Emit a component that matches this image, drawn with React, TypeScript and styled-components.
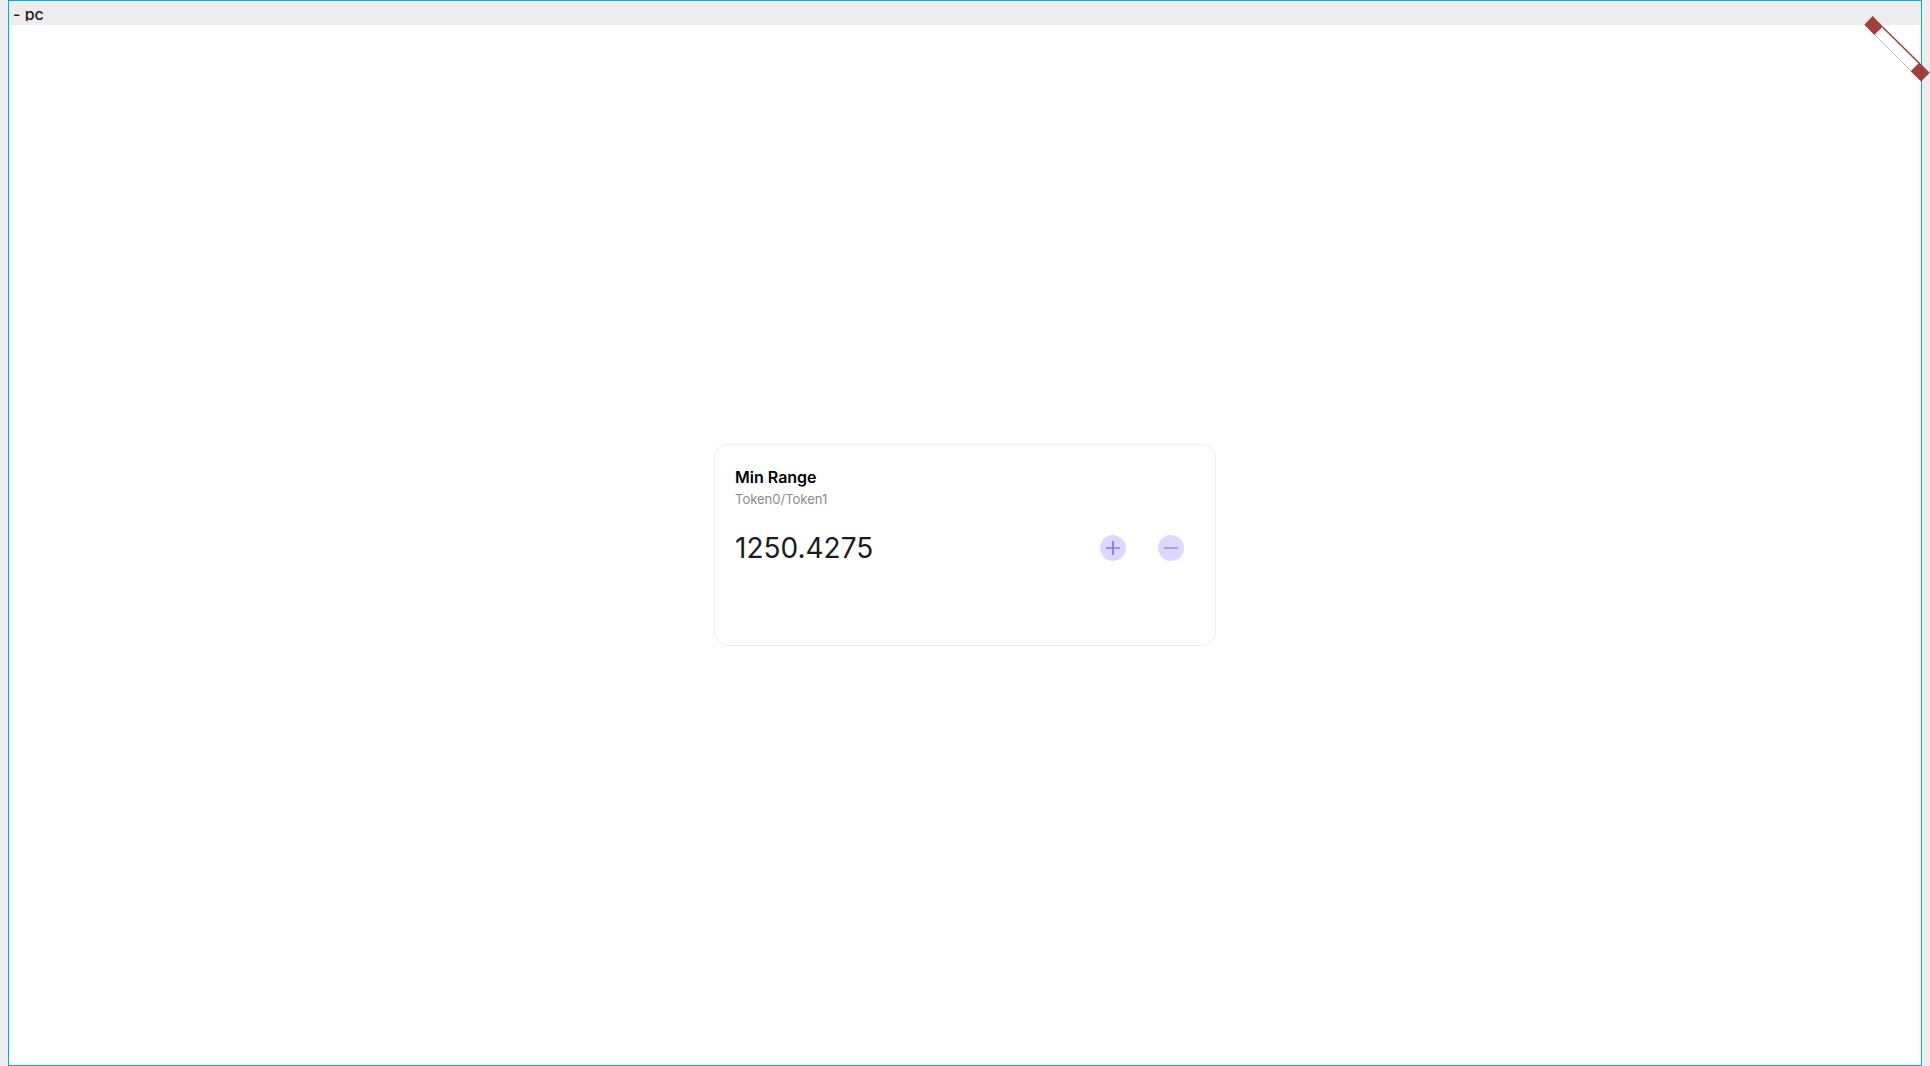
import React, { useState } from "react";
import styled, { createGlobalStyle } from "styled-components";

const GlobalStyle = createGlobalStyle`
  *, *::before, *::after { box-sizing: border-box; }
  body {
    margin: 0;
    background: #ededed;
    color: #1c1b1f;
    font-family: Inter, "Liberation Sans", sans-serif;
  }
`;

const Page = styled.div`
  position: relative;
  min-height: 100vh;
  padding: 0 8px;
  display: flex;
`;

const Frame = styled.main`
  flex: 1;
  display: flex;
  flex-direction: column;
  border: 1px solid #08a5ef;
`;

const FrameHeader = styled.header`
  height: 24px;
  padding: 2px 4px 0;
  background: #ededed;
`;

const FrameLabel = styled.h1`
  height: 18px;
  margin: 0;
  overflow: hidden;
  font-size: 16px;
  font-weight: 500;
  line-height: 22px;
`;

const Canvas = styled.div`
  flex: 1;
  display: flex;
  align-items: center;
  justify-content: center;
  background: #fff;
`;

const Card = styled.section`
  width: 100%;
  max-width: 502px;
  min-height: 202px;
  padding: 20px;
  border: 1px solid #efeff1;
  border-radius: 14px;
`;

const Title = styled.h2`
  margin: 0;
  color: #000;
  font-size: 16px;
  font-weight: 600;
  line-height: 24px;
`;

const Pair = styled.p`
  margin: 0;
  color: #8a8a8d;
  font-size: 13px;
  line-height: 21px;
`;

const ValueRow = styled.div`
  display: flex;
  align-items: center;
  gap: 32px;
  margin-top: 20px;
  padding-right: 11px;
`;

const ValueInput = styled.input`
  flex: 1;
  min-width: 0;
  height: 36px;
  padding: 0;
  border: 0;
  outline: 0;
  background: transparent;
  color: #1c1b1f;
  font-family: inherit;
  font-size: 28px;
  line-height: 36px;
`;

const StepButton = styled.button`
  display: grid;
  place-items: center;
  flex: none;
  width: 26px;
  height: 26px;
  padding: 0;
  border: 0;
  border-radius: 50%;
  background: #ded7ff;
  cursor: pointer;
`;

const Ribbon = styled.svg`
  position: absolute;
  top: 14px;
  right: 0;
  width: 66px;
  height: 70px;
  pointer-events: none;
`;

function PlusIcon() {
  return (
    <svg width="14" height="14" viewBox="0 0 14 14" aria-hidden="true">
      <path d="M0 7H14" stroke="#9f8aff" strokeWidth="2" />
      <path d="M7 0V14" stroke="#8468fb" strokeWidth="1.6" />
    </svg>
  );
}

function MinusIcon() {
  return (
    <svg width="14" height="14" viewBox="0 0 14 14" aria-hidden="true">
      <path d="M0 7H14" stroke="#ac99ff" strokeWidth="2" />
    </svg>
  );
}

function CornerRibbon() {
  return (
    <Ribbon viewBox="0 0 66 70" aria-hidden="true">
      <path d="M18.5 13L55.5 49.5L47.5 57.5L10.5 20.5Z" fill="#fff" />
      <path
        d="M20 28L27.5 22M27 35L34.5 29M34 42L41.5 36M41 49L48.5 43"
        stroke="#f5eeee"
        strokeWidth="0.6"
      />
      <path d="M10.5 20.5L47.5 57.5" stroke="#d3b5b5" strokeWidth="1" />
      <path d="M18.5 13L55.5 49.5" stroke="#a23f3f" strokeWidth="1.5" />
      <path d="M8.7 1.9L18.9 12.4L10.3 21L0.3 10.8Z" fill="#a23f3f" />
      <path d="M55.3 48.4L65.7 58.7L57 67.5L46.7 57.2Z" fill="#a23f3f" />
      <path d="M57.5 50.5V67" stroke="#813948" strokeWidth="1" />
    </Ribbon>
  );
}

export default function App() {
  const [value, setValue] = useState("1250.4275");
  const step = (amount: number) =>
    setValue((current) => ((Number(current) || 0) + amount).toFixed(4));

  return (
    <>
      <GlobalStyle />
      <Page>
        <Frame>
          <FrameHeader>
            <FrameLabel>- pc</FrameLabel>
          </FrameHeader>
          <Canvas>
            <Card>
              <Title id="min-range">Min Range</Title>
              <Pair>Token0/Token1</Pair>
              <ValueRow>
                <ValueInput
                  aria-labelledby="min-range"
                  inputMode="decimal"
                  value={value}
                  onChange={(event) => setValue(event.target.value)}
                />
                <StepButton type="button" aria-label="Increase" onClick={() => step(1)}>
                  <PlusIcon />
                </StepButton>
                <StepButton type="button" aria-label="Decrease" onClick={() => step(-1)}>
                  <MinusIcon />
                </StepButton>
              </ValueRow>
            </Card>
          </Canvas>
        </Frame>
        <CornerRibbon />
      </Page>
    </>
  );
}
